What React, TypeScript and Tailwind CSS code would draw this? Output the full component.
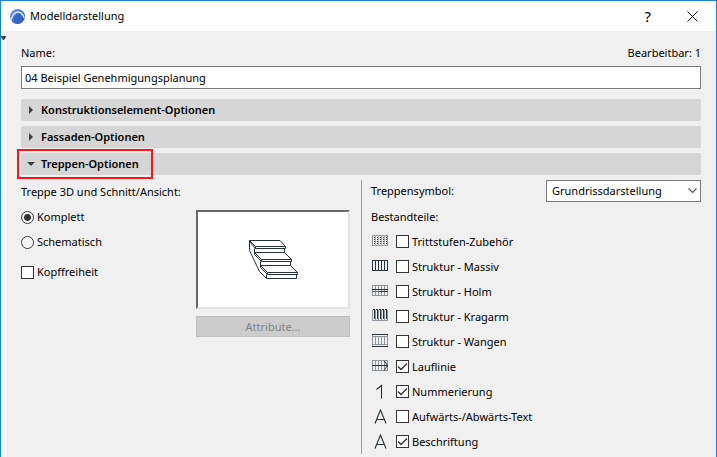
import { useState } from 'react';
import type { ReactNode } from 'react';

interface Component {
  id: string;
  label: string;
  icon: ReactNode;
  checked: boolean;
}

const GRID_LINES = 'M3.5 1v11M6.5 1v11M9.5 1v11M12.5 1v11';

function SymbolIcon({ children }: { children: ReactNode }) {
  return (
    <svg width="17" height="15" viewBox="-1 0 17 15" fill="none" stroke="#26323a" className="shrink-0">
      {children}
    </svg>
  );
}

const textIcon = <path d="M3 14.5L8.5 1L14 14.5M4.8 10.5h7.4" strokeWidth="1.1" />;

const COMPONENTS: Component[] = [
  {
    id: 'accessories',
    label: 'Trittstufen-Zubehör',
    checked: false,
    icon: (
      <>
        <rect x="0.5" y="1.5" width="15" height="10" stroke="#8f969b" />
        <path d={GRID_LINES} stroke="#a9afb3" />
        <path d="M2.5 3v7M5.5 3v7M8.5 3v7M11.5 3v7M14.5 3v7" strokeDasharray="1 1" />
      </>
    ),
  },
  {
    id: 'solid',
    label: 'Struktur - Massiv',
    checked: false,
    icon: (
      <>
        <rect x="0.5" y="1.5" width="15" height="10" />
        <path d={GRID_LINES} />
      </>
    ),
  },
  {
    id: 'beam',
    label: 'Struktur - Holm',
    checked: false,
    icon: (
      <>
        <rect x="0.5" y="1.5" width="15" height="10" stroke="#8f969b" />
        <path d={GRID_LINES} stroke="#8f969b" />
        <path d="M0 5.5h16M8 7.5h8" />
        <path d="M0 7.5h8" stroke="#59636a" />
      </>
    ),
  },
  {
    id: 'cantilever',
    label: 'Struktur - Kragarm',
    checked: false,
    icon: (
      <>
        <path d="M0.5 1v10.5h15V1M3.5 1v10M6.5 1v10M9.5 1v10M12.5 1v10" stroke="#8f969b" />
        <path d="M2.5 1v9M5.5 1v9M8.5 1v9M11.5 1v9M14.5 1v9" />
        <path d="M1 0.5h15" strokeDasharray="2 1" />
      </>
    ),
  },
  {
    id: 'stringer',
    label: 'Struktur - Wangen',
    checked: false,
    icon: (
      <>
        <path d="M0.5 1v11M15.5 1v11M3.5 3v8M6.5 3v8M9.5 3v8M12.5 3v8M0 2.5h16M0 10.5h16" stroke="#8f969b" />
        <path d="M0 0.5h16M0 12.5h16" />
      </>
    ),
  },
  {
    id: 'walking-line',
    label: 'Lauflinie',
    checked: true,
    icon: (
      <>
        <rect x="0.5" y="1.5" width="15" height="10" stroke="#8f969b" />
        <path d={GRID_LINES} stroke="#8f969b" />
        <path d="M0 6.5h15.5M12 1.5l3.5 5l-3.5 5" />
      </>
    ),
  },
  {
    id: 'numbering',
    label: 'Nummerierung',
    checked: true,
    icon: <path d="M4.5 5.5L9.5 1.5V14.5" strokeWidth="1.1" />,
  },
  { id: 'up-down', label: 'Aufwärts-/Abwärts-Text', checked: false, icon: textIcon },
  { id: 'description', label: 'Beschriftung', checked: true, icon: textIcon },
];

function Checkbox({ label, defaultChecked }: { label: string; defaultChecked?: boolean }) {
  return (
    <label className="flex items-center gap-[3px]">
      <span className="grid">
        <input
          type="checkbox"
          defaultChecked={defaultChecked}
          className="peer col-start-1 row-start-1 size-[13px] appearance-none border border-[#333] bg-white"
        />
        <svg
          viewBox="0 0 13 13"
          fill="none"
          stroke="#333"
          strokeWidth="1.4"
          className="pointer-events-none invisible col-start-1 row-start-1 size-[13px] peer-checked:visible"
        >
          <path d="M2 6.5L5 9.5L11 3.5" />
        </svg>
      </span>
      {label}
    </label>
  );
}

function Radio({ label, defaultChecked }: { label: string; defaultChecked?: boolean }) {
  return (
    <label className="flex items-center gap-[3px]">
      <input
        type="radio"
        name="display"
        defaultChecked={defaultChecked}
        className="size-[13px] appearance-none rounded-full border border-[#333] bg-white checked:bg-[radial-gradient(circle,#333_3px,#fff_4px)]"
      />
      {label}
    </label>
  );
}

function SectionHeader({ title, open, onToggle }: { title: string; open: boolean; onToggle: () => void }) {
  return (
    <button
      type="button"
      aria-expanded={open}
      onClick={onToggle}
      className="flex h-[22px] w-full items-center gap-[6px] rounded-xs bg-[#d6d6d6] pl-[6px] text-left font-semibold"
    >
      <svg width="8" height="8" viewBox="0 0 8 8" fill="#404040">
        {open ? <path d="M0 2h8L4 6z" /> : <path d="M2 0v8L6 4z" />}
      </svg>
      {title}
    </button>
  );
}

function StairPreview() {
  return (
    <svg width="49" height="39" viewBox="0 0 49 39" fill="none" stroke="#26323a">
      <path d="M0.5 0.5H31L36.5 6.5V8.5H6.5L0.5 1.5M6.5 8.5V6.5H36.5M0.5 0.5L6.5 6.5" />
      <path d="M5.5 8.5V12.5H35.5V8.5M35.5 12.5L42.5 19.5V21.5H12.5L5.5 14.5V12.5L12.5 19.5V21.5M12.5 19.5H42.5" />
      <path d="M11.5 21.5V25.5H41.5V21.5M41.5 25.5L48.5 32.5V34.5H18.5L11.5 27.5V25.5L18.5 32.5V34.5M18.5 32.5H48.5" />
      <path d="M17.5 34.5V38.5H47.5V34.5" />
      <path d="M0.5 0.5V10.5L10.5 31.5L17.5 38.5" />
    </svg>
  );
}

function TitleBar() {
  return (
    <header className="flex h-[30px] items-center bg-white pr-[18px] pl-[9px]">
      <svg width="15" height="15" viewBox="0 0 15 15">
        <defs>
          <linearGradient id="logo" x1="0" y1="0" x2="1" y2="1">
            <stop offset="0" stopColor="#7f9fe0" />
            <stop offset="0.5" stopColor="#3f70cf" />
            <stop offset="1" stopColor="#1b3f96" />
          </linearGradient>
        </defs>
        <circle cx="7.5" cy="7.5" r="7.5" fill="url(#logo)" />
        <path d="M0.8 11.5C2 6.5 5 3 8.5 3C11 3 12.8 5.5 14.3 9" fill="none" stroke="#dfe9fa" strokeWidth="1.3" />
        <path d="M3.5 13.5C4 9 6 4.8 8.8 4.8C10.8 4.8 12 8 12.5 12C9.5 15 6 15 3.5 13.5z" fill="#3566c4" />
      </svg>
      <h1 className="ml-[5px] flex-1">Modelldarstellung</h1>
      <div className="flex items-center gap-9">
        <button type="button" aria-label="Hilfe" className="text-[15px]">
          ?
        </button>
        <button type="button" aria-label="Schließen">
          <svg width="11" height="11" viewBox="0 0 11 11" stroke="#111">
            <path d="M0.5 0.5l10 10M10.5 0.5l-10 10" />
          </svg>
        </button>
      </div>
    </header>
  );
}

export default function App() {
  const [open, setOpen] = useState({ construction: false, facade: false, stairs: true });

  return (
    <div className="flex min-h-screen flex-col border-x border-t border-[#1883d7] bg-[#f0f0f0] font-['Noto_Sans','Open_Sans',sans-serif] text-[11px] leading-4 text-black">
      <TitleBar />
      <div className="flex flex-1">
        <div className="w-[5px] bg-[#f7f7f7] pt-[5px]">
          <svg width="5" height="4" viewBox="0 0 5 4" fill="#404040">
            <path d="M0 0h5v1L3 4H2L0 1z" />
          </svg>
        </div>

        <main className="flex-1 px-[15px] pt-[14px] pb-1">
          <div className="flex justify-between">
            <label htmlFor="name">Name:</label>
            <span>Bearbeitbar: 1</span>
          </div>
          <input
            id="name"
            type="text"
            defaultValue="04 Beispiel Genehmigungsplanung"
            className="mt-[5px] block h-[23px] w-full border border-[#7a7a7a] bg-white px-[3px]"
          />

          <div className="mt-[10px] flex flex-col gap-[5px]">
            <SectionHeader
              title="Konstruktionselement-Optionen"
              open={open.construction}
              onToggle={() => setOpen({ ...open, construction: !open.construction })}
            />
            <SectionHeader
              title="Fassaden-Optionen"
              open={open.facade}
              onToggle={() => setOpen({ ...open, facade: !open.facade })}
            />
            <div className="relative">
              <SectionHeader
                title="Treppen-Optionen"
                open={open.stairs}
                onToggle={() => setOpen({ ...open, stairs: !open.stairs })}
              />
              <div className="pointer-events-none absolute -top-1 -left-1 h-[30px] w-[136px] border-2 border-[#ff1414]" />
            </div>
          </div>

          {open.stairs && (
            <div className="mt-[5px] flex">
              <section className="grid w-[341px] grid-cols-[1fr_154px] grid-rows-[auto_1fr] border-r border-[#a0a0a0] pr-[11px]">
                <h2 id="display-label" className="col-span-2 pt-1">
                  Treppe 3D und Schnitt/Ansicht:
                </h2>
                <div role="group" aria-labelledby="display-label" className="pt-[9px]">
                  <div className="flex flex-col gap-[9px]">
                    <Radio label="Komplett" defaultChecked />
                    <Radio label="Schematisch" />
                  </div>
                  <div className="mt-[14px]">
                    <Checkbox label="Kopffreiheit" />
                  </div>
                </div>
                <div className="flex flex-col gap-[7px] pt-[10px]">
                  <div className="flex h-[99px] items-center justify-center border-2 border-t-[#696969] border-r-[#e3e3e3] border-b-[#e3e3e3] border-l-[#696969] bg-white">
                    <StairPreview />
                  </div>
                  <button type="button" disabled className="h-[21px] border border-[#bfbfbf] bg-[#ccc] text-[#838383]">
                    Attribute...
                  </button>
                </div>
              </section>

              <section className="flex-1 pl-[9px]">
                <div className="flex items-center justify-between">
                  <label htmlFor="symbol">Treppensymbol:</label>
                  <div className="grid w-[155px] items-center">
                    <select
                      id="symbol"
                      className="col-start-1 row-start-1 h-[22px] appearance-none border border-[#7a7a7a] bg-white pl-[5px]"
                    >
                      <option>Grundrissdarstellung</option>
                    </select>
                    <svg
                      width="9"
                      height="6"
                      viewBox="0 0 9 6"
                      fill="none"
                      stroke="#555"
                      strokeWidth="1.1"
                      className="pointer-events-none col-start-1 row-start-1 mr-1 justify-self-end"
                    >
                      <path d="M0.5 0.5l4 4l4-4" />
                    </svg>
                  </div>
                </div>
                <p className="mt-[7px]">Bestandteile:</p>
                <ul className="mt-1 flex flex-col">
                  {COMPONENTS.map((component) => (
                    <li key={component.id} className="flex h-[25px] items-center gap-2">
                      <SymbolIcon>{component.icon}</SymbolIcon>
                      <Checkbox label={component.label} defaultChecked={component.checked} />
                    </li>
                  ))}
                </ul>
              </section>
            </div>
          )}
        </main>
      </div>
    </div>
  );
}
